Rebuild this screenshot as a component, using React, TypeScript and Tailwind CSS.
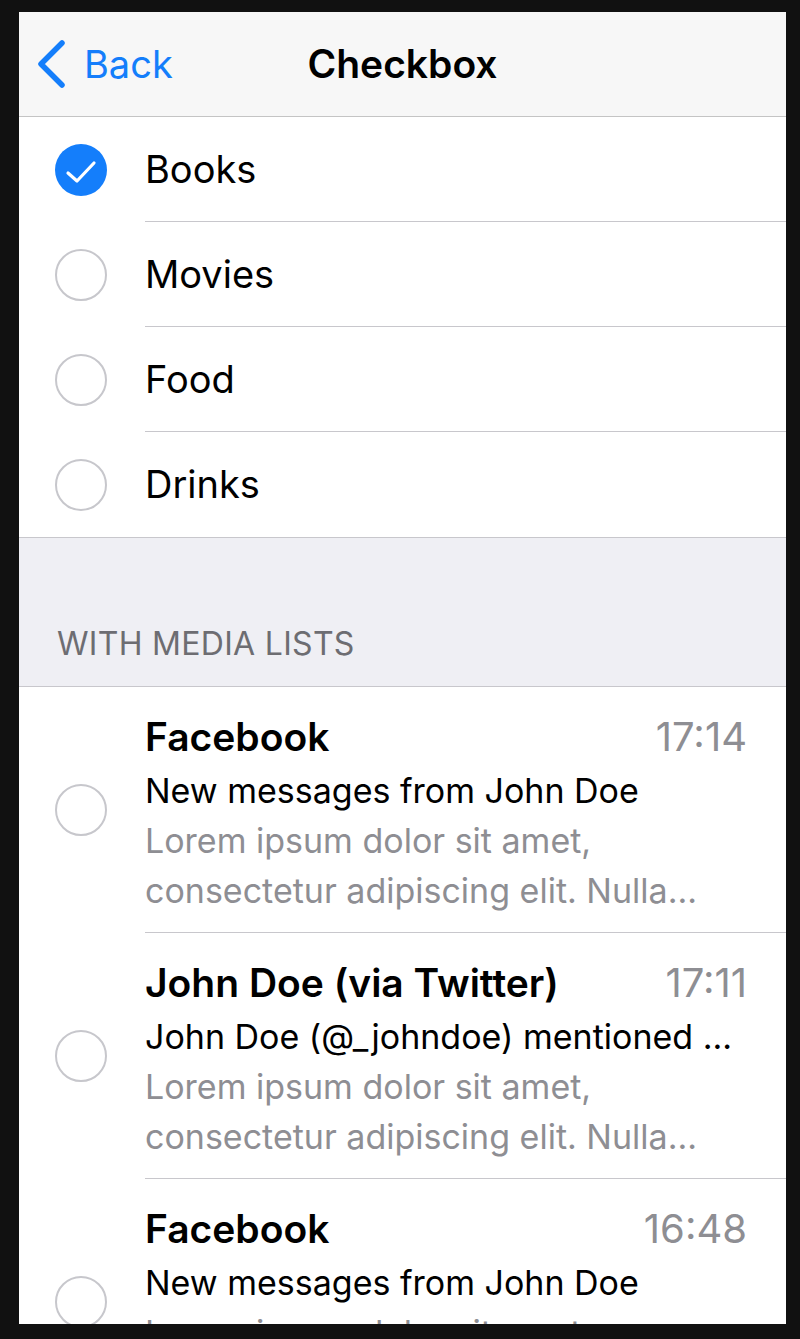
import React from "react";

const font = { fontFamily: 'Inter, "Noto Sans", sans-serif' };

const options = [
    { label: "Books", checked: true },
    { label: "Movies", checked: false },
    { label: "Food", checked: false },
    { label: "Drinks", checked: false },
];

const messages = [
    {
        title: "Facebook",
        time: "17:14",
        subtitle: "New messages from John Doe",
    },
    {
        title: "John Doe (via Twitter)",
        time: "17:11",
        subtitle: "John Doe (@_johndoe) mentioned ...",
    },
    {
        title: "Facebook",
        time: "16:48",
        subtitle: "New messages from John Doe",
    },
];

const Circle = ({ checked }: { checked: boolean }) =>
    checked ? (
        <div className="w-[52px] h-[52px] rounded-full bg-[#147efb] flex items-center justify-center">
            <svg width="52" height="52" viewBox="0 0 52 52" fill="none">
                <polyline points="13,29 22,37 39,19" stroke="#fff" strokeWidth="3.2" strokeLinecap="round" strokeLinejoin="round" />
            </svg>
        </div>
    ) : (
        <div className="w-[52px] h-[52px] rounded-full border-2 border-[#c7c7cc] bg-white" />
    );

const App = () => {
    return (
        <div className="h-[1339px] w-[800px] bg-[#111111] pt-[12px] pl-[19px] pr-[14px] pb-[15px] overflow-hidden" style={font}>
            <div className="h-full w-full bg-white overflow-hidden flex flex-col">
                {/* navbar */}
                <div className="relative h-[105px] shrink-0 bg-[#f7f7f7] border-b border-[#c4c4c4] flex items-center justify-center">
                    <div className="absolute left-[16px] top-0 bottom-0 flex items-center gap-[15px] text-[#147efb]">
                        <svg width="34" height="52" viewBox="0 0 34 52" fill="none">
                            <polyline points="27,5 6,26 27,47" stroke="#147efb" strokeWidth="5.5" strokeLinecap="round" strokeLinejoin="round" />
                        </svg>
                        <span className="text-[38px] leading-none -mt-[1px]">Back</span>
                    </div>
                    <h1 className="text-[39px] font-semibold text-black leading-none -mt-[1px]">Checkbox</h1>
                </div>

                {/* checkbox list */}
                <div className="border-b border-[#c8c7cc]">
                    {options.map((o, i) => (
                        <div key={o.label} className="flex h-[105px]">
                            <div className="w-[126px] shrink-0 flex items-center pl-[36px]">
                                <Circle checked={o.checked} />
                            </div>
                            <div
                                className={`flex-1 flex items-center text-[38px] text-black ${
                                    i < options.length - 1 ? "border-b border-[#c8c7cc]" : ""
                                }`}
                            >
                                {o.label}
                            </div>
                        </div>
                    ))}
                </div>

                {/* section header */}
                <div className="h-[149px] shrink-0 bg-[#efeff4] border-b border-[#c8c7cc] flex items-end pl-[38px] pb-[24px]">
                    <span className="text-[32px] leading-[36px] tracking-[0.3px] text-[#6d6d72]">WITH MEDIA LISTS</span>
                </div>

                {/* media list */}
                <div>
                    {messages.map((m, i) => (
                        <div key={i} className="flex">
                            <div className="w-[126px] shrink-0 flex items-center pl-[36px]">
                                <Circle checked={false} />
                            </div>
                            <div className="flex-1 min-w-0 border-b border-[#c8c7cc] pt-[21px] pb-[16px] pr-[39px]">
                                <div className="flex items-center justify-between h-[58px]">
                                    <span className="text-[39px] font-semibold text-black">{m.title}</span>
                                    <span className="text-[40px] text-[#8e8e93]">{m.time}</span>
                                </div>
                                <div className="text-[34px] leading-[50px] text-black truncate">{m.subtitle}</div>
                                <div className="text-[34px] leading-[50px] text-[#8e8e93]">
                                    Lorem ipsum dolor sit amet,
                                    <br />
                                    consectetur adipiscing elit. Nulla...
                                </div>
                            </div>
                        </div>
                    ))}
                </div>
            </div>
        </div>
    );
};

export default App;
